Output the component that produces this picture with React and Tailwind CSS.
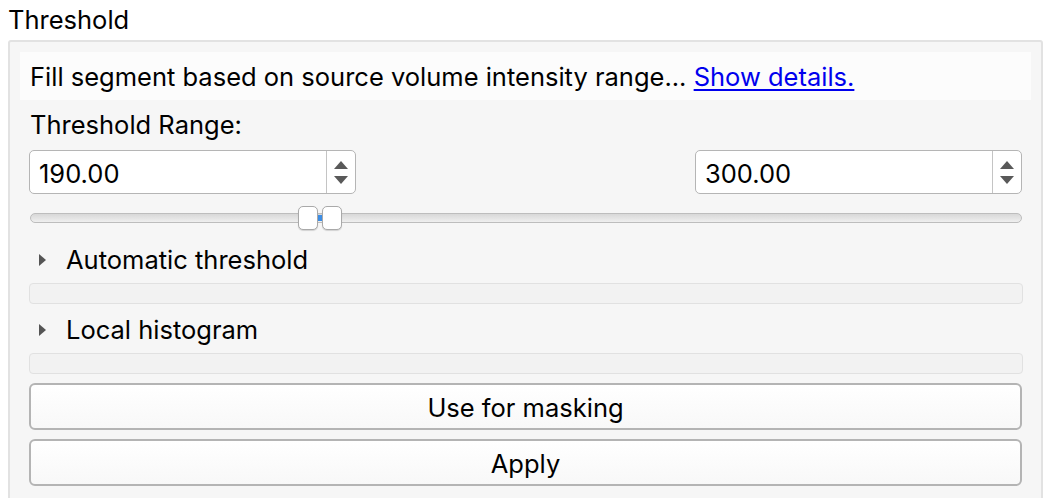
export default function App() {
  return (
    <div className="w-[1052px] h-[498px] overflow-hidden bg-white text-black font-['Inter','Noto_Sans',sans-serif] text-[25.5px] leading-none">
      <div className="h-[40px] pl-[8px] pt-[7px]">Threshold</div>

      <div className="ml-[8px] w-[1035px] h-[470px] border-[2px] border-[#e2e2e2] bg-[#f6f6f6] rounded-[3px] px-[10px] pt-[10px]">
        <div className="h-[48px] bg-[#fcfcfc] flex items-center pl-[10px] pt-[2px]">
          <span>Fill segment based on source volume intensity range...&nbsp;</span>
          <a href="#" className="text-[#0000ee] underline underline-offset-[3px] decoration-[1.5px]">
            Show details.
          </a>
        </div>

        <div className="pl-[9px] pr-[9px]">
          <div className="h-[50px] flex items-center pl-[1px]">Threshold Range:</div>

          <div className="flex justify-between">
            <SpinBox value="190.00" />
            <SpinBox value="300.00" />
          </div>

          <RangeSlider />

          <Collapsible label="Automatic threshold" />
          <Collapsible label="Local histogram" />

          <div className="mt-[9px] flex flex-col gap-[9px]">
            <Button label="Use for masking" />
            <Button label="Apply" />
          </div>
        </div>
      </div>
    </div>
  );
}

function SpinBox({ value }) {
  return (
    <div className="w-[327px] h-[44px] flex bg-white border-[1.5px] border-[#b5b5b5] rounded-[5px] overflow-hidden">
      <div className="flex-1 flex items-center pl-[9px] pt-[4px]">{value}</div>
      <div className="w-[29px] border-l-[1.5px] border-[#c4c4c4] flex flex-col items-center justify-center gap-[7px]">
        <svg width="14" height="8" viewBox="0 0 14 8">
          <path d="M7 0L14 8H0Z" fill="#595959" />
        </svg>
        <svg width="14" height="8" viewBox="0 0 14 8">
          <path d="M0 0H14L7 8Z" fill="#595959" />
        </svg>
      </div>
    </div>
  );
}

function RangeSlider() {
  return (
    <div className="relative h-[35px] mt-[12px] -mb-[7px]">
      <div className="absolute left-[1px] right-0 top-[7px] h-[10px] rounded-full border-[1.5px] border-[#bdbdbd] bg-gradient-to-b from-[#d8d8d8] to-[#efefef]" />
      <div className="absolute left-[288px] w-[6px] top-[9px] h-[6px] bg-[#3d8ee6]" />
      <div className="absolute left-[269px] top-0 w-[20px] h-[24px] rounded-[5px] border-[1.5px] border-[#a9a9a9] bg-white shadow-[0_1px_1px_rgba(0,0,0,0.15)]" />
      <div className="absolute left-[293px] top-0 w-[20px] h-[24px] rounded-[5px] border-[1.5px] border-[#a9a9a9] bg-white shadow-[0_1px_1px_rgba(0,0,0,0.15)]" />
    </div>
  );
}

function Collapsible({ label }) {
  return (
    <div>
      <div className="h-[49px] flex items-center pt-[3px]">
        <svg width="8" height="12" viewBox="0 0 8 12" className="ml-[10px] mr-[19px]">
          <path d="M0 0L7 6L0 12Z" fill="#555" />
        </svg>
        <span>{label}</span>
      </div>
      <div className="h-[21px] rounded-[4px] border-[1.5px] border-[#e1e1e1] bg-[#f2f2f2] mr-[-1px]" />
    </div>
  );
}

function Button({ label }) {
  return (
    <button className="w-full h-[47px] rounded-[6px] border-[2px] border-[#b4b4b4] bg-gradient-to-b from-white to-[#f8f8f8] flex items-center justify-center pt-[3px] text-[25.5px] leading-none text-black">
      {label}
    </button>
  );
}
